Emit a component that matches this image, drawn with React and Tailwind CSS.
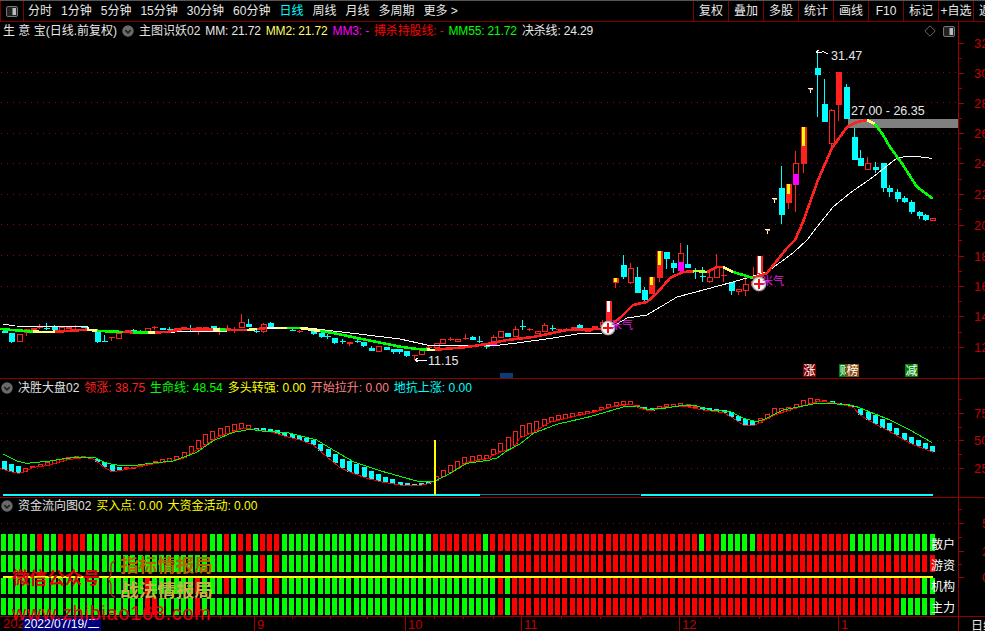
import React from "react";

const RED = "#ff2020";
const CY = "#00ffff";
const GR = "#00ff00";

const lerp = (pts, x) => {
  if (x <= pts[0][0]) return pts[0][1];
  for (let i = 1; i < pts.length; i++) {
    if (x <= pts[i][0]) {
      const [a, b] = pts[i - 1];
      const [c, d] = pts[i];
      return b + ((d - b) * (x - a)) / (c - a || 1);
    }
  }
  return pts[pts.length - 1][1];
};
const line = (pts) => pts.map((p) => `${p[0]},${p[1]}`).join(" ");

// candles: x, kind, bodyTop, bodyBottom, high, low; kind: c cyan, h hollow, R solid, y yellow-topped, w white-topped, m hollow+magenta
const CANDLES = [
  [3.5,"c",331,333],[10.5,"c",333,342,333,343],[18.5,"h",334,342],[25.5,"h",329,333,329,336],[32.5,"R",328,330,328,332],[39,"R",327,328,324,329],[46,"c",328,329,323,330],[54,"c",327,330,325,331],[61,"h",327,331],[68,"R",327,329],[75,"R",326,327,325,329],[83,"c",326,328],[97,"c",332,342,332,343],[104,"c",341,342,335,342],[111,"R",337,338,337,341],[118,"h",333,339],[127,"h",330,333],[133,"c",330,331,329,332],[140,"c",331,332,330,333],[147,"h",328,332],[154,"R",327,328,326,330],[162,"c",328,330],[169,"c",329,330,327,331],[176,"h",328,331],[183,"h",327,330],[190,"c",329,330,325,331],[198,"R",327,331,327,335],[205,"R",327,329],[213,"c",326,329],[219,"R",331,332,327,335],[227,"R",328,329,325,330],[234,"R",329,330,327,333],[241,"h",322,328,314,328],[248,"c",324,327,319,327],[256,"c",331,332,329,333],[263,"h",324,332,323,333],[270,"c",323,327,322,328],[278,"c",327,328],[285,"c",328,329],[292,"c",330,331,328,331],[299,"R",331,332,330,333],
  [306,"R",328,330],[313,"c",330,334,330,335],[321,"c",333,337,333,338],[327,"c",336,337,334,339],[334,"c",338,343,338,344],[342,"c",341,342,339,344],[349,"h",342,344,342,346],[357,"c",341,342,339,343],[363,"c",342,346,342,347],[371,"c",348,351,346,351],[378,"h",346,352],[386,"c",347,350],[393,"c",349,352,349,354],[399,"c",349,352,349,354],[406,"c",351,356,351,357],[414,"R",355,356,355,360],[421,"h",350,355],[428,"R",347,348,345,350],[436,"h",343,348],[442,"h",339,344],[450,"R",339,340,337,341],[457,"h",339,342],[465,"R",338,339,334,340],[472,"c",337,340,336,340],[479,"c",341,342,336,343],[486,"c",344,347,344,349],[493,"m",337,345,335,345,341],[500,"h",331,338],[507,"c",333,337],[515,"h",329,337,326,337],[522,"c",326,327,320,330],[529,"R",329,330,328,331],[537,"h",331,334],[544,"h",325,332,323,332],[552,"c",328,329,325,331],[558,"R",329,330],[566,"R",329,330,328,331],
  [572.6,"h",327,329],[579,"c",325,328,324,329],[587,"h",329,332],[594,"h",326,328],[601.6,"h",322,327,320,327],[608,"w",301,330,301,330,312],[615,"y",278,283,278,288,282],[623,"c",265,277,255,279],[630,"h",268,283,263,284],[637,"c",277,293,267,293],[644,"c",290,300,287,303],[651,"y",277,294,277,294,285],[659,"y",251,278,251,282,265],[666,"c",252,259,252,269],[673,"c",263,268,260,273],[680,"m",253,271,243,272,262],[687,"c",264,268,245,268],[695,"c",270,271,268,279],[702,"c",276,277,267,282],[709,"h",277,282,272,283],[716,"h",267,278,254,278],[723,"R",275,276,267,282],[731,"c",282,291,282,295],[738,"h",289,292,289,295],[745,"h",284,291,277,296],[752.6,"h",281,286,267,286],[759,"w",256,278,256,278,273],
  [781,"c",188,215,166,224],[788,"y",184,203,184,209,194],[795,"m",163,185,151,212,174],[803,"y",127,164,127,173,146],[817,"c",68,75,52,117],[824,"c",104,122,79,122],[831,"h",110,144,109,148],[838,"R",72,105,72,121],[846,"c",87,119,84,119],[853.6,"c",137,160,128,160],[860,"c",158,166,150,166],[867,"h",163,170,157,170],[875,"c",167,170,162,173],[882.6,"c",163,188,163,192],[889,"c",188,192,185,197],[896.6,"c",192,199,189,202],[903.6,"c",198,202,196,203],[911,"c",202,212,200,214],[918.6,"c",212,216,211,219],[925,"c",215,220,214,221],[932,"h",218,221],
];

const Candle = ({ c }) => {
  const [x, k, t, b, hi = t, lo = b, split] = c;
  const px = Math.round(x) - 2.5 + 0.5;
  const colour = k === "c" ? CY : RED;
  const cx = Math.round(x) + 0.5;
  return (
    <g>
      {(hi < t || lo > b) && <line x1={cx} x2={cx} y1={hi} y2={lo} stroke={colour} />}
      {k === "h" && <rect x={px} y={t + 0.5} width={5} height={Math.max(b - t - 1, 1)} fill="#000" stroke={RED} />}
      {k === "c" && <rect x={px - 0.5} y={t} width={6} height={b - t} fill={CY} />}
      {k === "R" && <rect x={px - 0.5} y={t} width={6} height={b - t} fill={RED} />}
      {k === "y" && <><rect x={px - 0.5} y={t} width={6} height={b - t} fill={RED} /><rect x={px + 1} y={t} width={3} height={split - t} fill="#ffff00" /></>}
      {k === "w" && <><rect x={px - 0.5} y={t} width={6} height={b - t} fill={RED} /><rect x={px + 1} y={t} width={3} height={split - t} fill="#fff" /></>}
      {k === "m" && <><rect x={px} y={t + 0.5} width={5} height={split - t} fill="#000" stroke={RED} /><rect x={px - 0.5} y={split} width={6} height={b - split} fill="#ff00ff" /></>}
    </g>
  );
};

const WHITE_MA = [[3,324],[15,326],[87,326.5],[90,330],[150,333],[183,331.7],[247,330.7],[267,328],[300,327],[333,331],[367,335],[400,339],[427,345],[467,345],[500,345],[517,343],[553,338],[577,334],[602,333],[627,318],[647,315],[677,297],[707,289],[733,282],[767,272],[793,253],[807,240],[817,227],[833,207],[850,193],[873,177],[897,158],[910,156],[927,157.5],[932,159]];
const THICK = [[0,329],[13,330],[33,331.7],[50,332],[67,331],[87,329.7],[100,331],[123,332],[147,332.7],[167,332],[183,329],[213,329.7],[247,330],[267,328],[300,328],[333,333],[367,340],[400,346.7],[417,349],[433,350],[467,347],[487,344],[507,340],[533,337],[567,330],[600,329],[608,327],[620,318],[633,305],[647,302],[657,293],[670,278],[683,272],[697,271],[707,272],[717,267],[723,267],[733,272],[743,275],[753,278],[767,273],[787,248],[795,240],[803,222],[818,180],[832,148],[847,127],[857,122],[867,120],[875,124],[883,135],[890,147],[903,165],[917,187],[932,198]];
const Y = "#ffff80";
const STOPS = [[33,GR],[55,Y],[87,RED],[97,Y],[123,GR],[133,RED],[148,GR],[155,Y],[213,RED],[220,Y],[227,GR],[247,RED],[257,Y],[267,RED],[277,"#ffffff"],[287,Y],[300,GR],[320,Y],[427,GR],[435,Y],[693,RED],[707,"#b0ff40"],[723,RED],[733,Y],[753,GR],[867,RED],[875,Y],[933,GR]];
const thickRuns = () => {
  const runs = [];
  let start = 0;
  STOPS.forEach(([end, colour]) => {
    const pts = [];
    for (let x = start; x <= end; x += 1) pts.push([x, lerp(THICK, x)]);
    runs.push({ colour, pts });
    start = end;
  });
  return runs;
};

const GRID = [72, 102, 133, 163, 194, 224, 255, 286, 316, 347];
const Dots = ({ ys }) => ys.map((y) => <line key={y} x1="1" x2="958" y1={y + 0.5} y2={y + 0.5} stroke="#a00000" strokeDasharray="1 5" />);

const Sparkle = ({ x, y }) => (
  <g>
    <circle cx={x} cy={y} r="7.5" fill="url(#ball)" shapeRendering="auto" />
    <path d={`M${x - 5} ${y}H${x + 5}M${x} ${y - 5}V${y + 5}`} stroke="#f01010" strokeWidth="2" />
    <text x={x + 3} y={y + 1} fontSize="11" fill="#e020e0">米气</text>
  </g>
);

const Tmark = ({ x, y }) => (
  <g>
    <path d={`M${x - 2.5} ${y + 0.5}H${x + 3}M${x + 0.5} ${y}V${y + 5}`} stroke="#fff" fill="none" />
    <path d={`M${x - 1.5} ${y + 1.5}H${x + 2.5}`} stroke="#ff9000" fill="none" />
  </g>
);

const MainChart = () => (
  <svg viewBox="0 22 958 356" width="958" height="356" shapeRendering="crispEdges" className="block">
    <defs>
      <radialGradient id="ball">
        <stop offset="70%" stopColor="#ffffff" />
        <stop offset="100%" stopColor="#777777" />
      </radialGradient>
    </defs>
    <Dots ys={GRID} />
    <rect x="848" y="119" width="110" height="9" fill="#808080" />
    {CANDLES.map((c, i) => <Candle key={i} c={c} />)}
    <Tmark x={810} y={88} />
    <Tmark x={774} y={198} />
    <Tmark x={767} y={229} />
    <polyline points={line(WHITE_MA)} fill="none" stroke="#fff" strokeWidth="1" />
    {thickRuns().map((r, i) => (
      <polyline key={i} points={line(r.pts)} fill="none" stroke={r.colour} strokeWidth="2.6" />
    ))}
    <Sparkle x={608} y={328} />
    <Sparkle x={759} y={284} />
    <path d="M816 52h6M816 52l3-2M822 51l6 3" stroke="#fff" fill="none" />
    <path d="M415 360h12M415 360l3-2M415 360l3 2" stroke="#fff" fill="none" />
    <g fontFamily="'Liberation Sans',sans-serif" fontSize="12.5" fill="#e8e8e8" shapeRendering="auto">
      <text x="831" y="60">31.47</text>
      <text x="851" y="115">27.00 - 26.35</text>
      <text x="428" y="365">11.15</text>
    </g>
  </svg>
);

const A1 = [[0,252],[30,265],[55,273],[75,280],[100,272],[140,260],[200,248],[230,241],[270,245],[285,250],[310,260],[335,270],[360,278],[410,274],[470,256],[520,248],[550,232],[590,197],[620,175],[650,163],[700,148],[730,142],[760,157],[810,162],[860,172],[900,185],[940,195],[980,220],[1020,250],[1060,262],[1100,282],[1150,305],[1200,320],[1250,328],[1285,318],[1310,300],[1350,270],[1400,242],[1470,240]];
const B1 = [[0,280],[30,290],[55,295],[75,290],[100,277],[140,272],[200,255],[230,250],[270,247],[285,255],[310,275],[335,290],[360,287],[410,276],[470,265],[520,258],[550,250],[590,225],[620,208],[650,187],[700,170],[730,160],[760,163],[810,170],[860,185],[900,195],[940,210],[980,245],[1020,278],[1060,295],[1100,310],[1150,322],[1200,330],[1250,333],[1285,326],[1310,315],[1350,295],[1400,262],[1470,250]];
const A2 = [[0,228],[30,205],[70,172],[90,150],[130,142],[180,125],[250,113],[310,105],[370,80],[425,78],[450,95],[480,100],[520,88],[580,85],[640,97],[700,105],[730,115],[760,130],[790,138],[830,118],[850,100],[900,95],[950,70],[990,72],[1040,82],[1090,92],[1110,102],[1160,122],[1200,147],[1260,185],[1330,213]];
const B2 = [[0,245],[30,232],[70,220],[90,188],[130,172],[180,142],[250,125],[310,112],[370,95],[425,88],[450,100],[480,108],[520,98],[580,93],[640,105],[700,113],[730,130],[760,150],[790,153],[830,133],[850,122],[900,105],[950,90],[990,78],[1040,85],[1090,97],[1110,120],[1160,150],[1200,170],[1260,205],[1330,232]];
const G1 = [[10,238],[50,258],[80,265],[150,258],[200,250],[240,246],[285,248],[300,255],[320,265],[350,270],[400,272],[450,265],[520,258],[590,232],[640,197],[700,172],[750,163],[800,170],[860,172],[950,195],[1000,225],[1060,260],[1150,290],[1250,318],[1300,320],[1350,295],[1400,265],[1470,255]];
const G2 = [[0,253],[20,250],[50,228],[90,207],[130,175],[200,148],[300,125],[400,96],[440,93],[470,103],[520,100],[580,91],[620,93],[660,105],[720,110],[760,130],[800,140],[830,130],[880,105],[980,85],[1070,88],[1100,95],[1200,135],[1260,165],[1325,202]];
const conv = (pts, off) => pts.map(([x, y]) => [off + x / 3, 375 + y / 3]);
const UP = [...conv(A1, 0), ...conv(A2, 490)].sort((a, b) => a[0] - b[0]);
const LOW = [...conv(B1, 0), ...conv(B2, 490)].sort((a, b) => a[0] - b[0]);
const COOL = [[0, 25], [95, 122], [250, 433], [638, 652], [697, 758], [825, 850], [850, 940]];

const IndicatorOne = () => {
  const bars = [];
  for (let i = 0; i < 130; i++) bars.push(3.5 + 7.2 * i);
  return (
    <svg viewBox="0 379 958 118" width="958" height="118" shapeRendering="crispEdges" className="block">
      <Dots ys={[413, 440, 468]} />
      {bars.map((x) => {
        const t = Math.round(lerp(UP, x));
        const b = Math.round(lerp(LOW, x));
        const cool = COOL.some(([a, z]) => x >= a && x <= z);
        const px = Math.round(x) - 2;
        return cool ? (
          <rect key={x} x={px} y={t} width={5} height={Math.max(b - t, 1)} fill={CY} />
        ) : (
          <rect key={x} x={px + 0.5} y={t + 0.5} width={4} height={Math.max(b - t - 1, 1)} fill="#000" stroke={RED} />
        );
      })}
      <polyline points={line(LOW)} fill="none" stroke="#f00000" strokeWidth="1" />
      <polyline points={line([...conv(G1, 0), ...conv(G2, 490)].sort((a, b) => a[0] - b[0]))} fill="none" stroke={GR} strokeWidth="1" />
      <rect x="3" y="494" width="477" height="2" fill={CY} />
      <rect x="480" y="494" width="160" height="1" fill="#00808c" />
      <rect x="641" y="494" width="292" height="2" fill={CY} />
      <rect x="434" y="440" width="2" height="55" fill="#ffff00" />
    </svg>
  );
};

const ranges = (list) => {
  const out = new Array(130).fill(false);
  list.forEach((v) => {
    if (Array.isArray(v)) for (let i = v[0]; i <= v[1]; i++) out[i] = true;
    else out[v] = true;
  });
  return out;
};
const ROWS = [
  { y: 534, h: 17, red: ranges([5, [8, 11], [17, 28], 31, [33, 34], [36, 38], [60, 66], [68, 96], [98, 99], [105, 117]]) },
  { y: 555, h: 17, red: ranges([33, 36, 38, 69, [71, 129]]) },
  { y: 578, h: 16, red: ranges([20, 27, 31, 33, 36, 38, 69, [71, 127]]) },
  { y: 598, h: 17, red: ranges([20, 21, 27, 69, [71, 124]]) },
];

const IndicatorTwo = () => (
  <svg viewBox="0 498 958 118" width="958" height="118" shapeRendering="crispEdges" className="block">
    <Dots ys={[523]} />
    {ROWS.map((r) =>
      r.red.map((isRed, i) => (
        <rect key={`${r.y}-${i}`} x={Math.round(0.7 + 7.2 * i)} y={r.y} width={5} height={r.h} fill={isRed ? "#ff0000" : "#00ff00"} />
      ))
    )}
    <rect x="3" y="576" width="930" height="2" fill="#ffff00" />
  </svg>
);

const Chevron = () => (
  <svg width="12" height="12" viewBox="0 0 13 13" className="shrink-0">
    <circle cx="6.5" cy="6.5" r="6.2" fill="#6a6a6a" />
    <path d="M3.5 5.5l3 3 3-3" fill="none" stroke="#1c1c1c" strokeWidth="1.6" />
  </svg>
);

const PanelToggle = () => (
  <svg width="12" height="11" viewBox="0 0 12 11" className="shrink-0">
    <rect x="0.5" y="0.5" width="11" height="10" rx="1.5" fill="#222" stroke="#777" />
    <rect x="6.5" y="2" width="3.5" height="7" fill="#bbb" />
  </svg>
);

const LEFT_TABS = ["分时", "1分钟", "5分钟", "15分钟", "30分钟", "60分钟", "日线", "周线", "月线", "多周期", "更多 >"];
const RIGHT_TABS = ["复权", "叠加", "多股", "统计", "画线", "F10", "标记", "+自选", "返回"];

const Toolbar = () => (
  <div className="flex h-[22px] shrink-0 border-t border-t-[#555555] border-b border-b-[#800000] text-[12px] text-[#e8e8e8]">
    <div className="flex h-full w-[24px] shrink-0 items-center justify-center border-r border-l border-[#800000]">
      <PanelToggle />
    </div>
    <div className="flex min-w-0 flex-1 items-center gap-[9px] pl-[4px] whitespace-nowrap">
      {LEFT_TABS.map((t) => (
        <span key={t} className={t === "日线" ? "text-[#00ffff]" : ""}>{t}</span>
      ))}
    </div>
    <div className="flex w-[292px] shrink-0 overflow-hidden">
      {RIGHT_TABS.map((t) => (
        <span key={t} className="flex w-[35px] shrink-0 items-center justify-center border-l border-[#800000] whitespace-nowrap">{t}</span>
      ))}
    </div>
  </div>
);

const Leg = ({ c, children }) => <span style={{ color: c }}>{children}</span>;

const Legend = ({ items, name, className = "" }) => (
  <div className={`absolute left-[1px] flex h-[16px] items-center gap-[5px] text-[12px] whitespace-nowrap ${className}`}>
    <Chevron />
    <span className="text-[#e0e0e0]">{name}</span>
    {items.map(([c, t]) => <Leg key={t} c={c}>{t}</Leg>)}
  </div>
);

const AxisLabels = ({ labels, left = "pl-[15px]" }) =>
  labels.map(([t, y, minor]) => (
    <div key={`${t}-${y}`} className="absolute right-0 left-0 flex items-center" style={{ top: y - 5 }}>
      <span className={`h-px bg-[#a00000] ${minor ? "w-[3px]" : "w-[5px]"}`} />
      {t && <span className={`absolute top-[-7px] ${left} text-[13px] leading-[15px] text-[#c00000]`}>{t}</span>}
    </div>
  ));

const MAIN_AXIS = [["32", 43],["", 58, 1],["30", 73],["", 88, 1],["28", 103],["", 118, 1],["26", 133],["", 148, 1],["24", 163],["", 179, 1],["22", 194],["", 209, 1],["20", 225],["", 240, 1],["18", 256],["", 271, 1],["16", 286],["", 301, 1],["14", 316],["", 332, 1],["12", 347]];

const Badge = ({ bg, children, className = "" }) => (
  <span className={`absolute top-[342px] flex h-[13px] w-[13px] items-center justify-center text-[12px] leading-none text-white ${className}`} style={{ background: bg }}>{children}</span>
);

const DATE_MARKS = [[254, "9"], [405, "10"], [521, "11"], [679, "12"], [838, "1"]];
const SMALL_TICKS = [292, 330, 367, 434, 463, 493, 561, 600, 640, 719, 759, 798, 100, 140, 180, 220];

const App = () => (
  <div className="flex h-[631px] w-[985px] flex-col overflow-hidden bg-black font-['Liberation_Sans','Noto_Sans_CJK_SC',sans-serif]">
    <Toolbar />
    <div className="flex h-[357px] shrink-0 border-b border-[#900000]">
      <div className="relative w-[958px] shrink-0 border-r-0">
        <MainChart />
        <div className="absolute top-[1px] left-[3px] flex h-[16px] items-center gap-[5px] text-[12px] tracking-[-0.15px] whitespace-nowrap">
          <span className="w-[114px] tracking-normal text-[#e8e8e8]">生 意 宝(日线.前复权)</span>
          <Chevron />
          <span className="tracking-normal text-[#e0e0e0]">主图识妖02</span>
          <Leg c="#e8e8e8">MM: 21.72</Leg>
          <Leg c="#ffff66">MM2: 21.72</Leg>
          <Leg c="#ff00ff">MM3: -</Leg>
          <Leg c="#ff0000">搏杀持股线: -</Leg>
          <Leg c="#00ff00">MM55: 21.72</Leg>
          <Leg c="#e8e8e8">决杀线: 24.29</Leg>
        </div>
        <svg width="12" height="12" viewBox="0 0 12 12" className="absolute top-[3px] left-[924px]">
          <path d="M6 .8L11.2 6 6 11.2.8 6z" fill="none" stroke="#666" />
        </svg>
        <div className="absolute top-[4px] left-[943px]"><PanelToggle /></div>
        <Badge bg="#800000" className="left-[803px]">涨</Badge>
        <Badge bg="#008000" className="left-[839px]">财</Badge>
        <Badge bg="#8b4a10" className="left-[846px]">榜</Badge>
        <Badge bg="#008000" className="left-[905px]">减</Badge>
        <span className="absolute top-[351px] left-[500px] h-[5px] w-[13px] bg-[#0a3c78]" />
      </div>
      <div className="relative flex-1 border-l border-[#a00000]">
        <AxisLabels labels={MAIN_AXIS.map(([t, y, m]) => [t, y - 22 + 5, m])} />
      </div>
    </div>
    <div className="flex h-[119px] shrink-0 border-b border-[#900000]">
      <div className="relative w-[958px] shrink-0">
        <IndicatorOne />
        <Legend
          name="决胜大盘02"
          className="top-[1px]"
          items={[["#ff2020","领涨: 38.75"],["#00ff00","生命线: 48.54"],["#ffff00","多头转强: 0.00"],["#ff8080","开始拉升: 0.00"],["#00ffff","地抗上涨: 0.00"]]}
        />
      </div>
      <div className="relative flex-1 border-l border-[#a00000]">
        <AxisLabels labels={[["75", 39],["", 25, 1],["", 53, 1],["50", 66],["", 80, 1],["25", 94]]} />
      </div>
    </div>
    <div className="flex h-[119px] shrink-0 border-b border-[#900000]">
      <div className="relative w-[958px] shrink-0">
        <IndicatorTwo />
        <Legend
          name="资金流向图02"
          className="top-[0px]"
          items={[["#ffff00","买入点: 0.00"],["#ffff00","大资金活动: 0.00"]]}
        />
        <div className="absolute top-[37px] right-[3px] flex flex-col text-[12px] leading-[21px] text-white">
          <span>散户</span><span>游资</span><span>机构</span><span>主力</span>
        </div>
        <div className="pointer-events-none absolute top-[58px] left-[12px] flex items-center">
          <span className="text-[17.6px] leading-none font-bold text-[#e00010]">微信公众号</span>
          <svg width="8" height="38" viewBox="2 0 8 38" className="ml-[8px] shrink-0">
            <path d="M9 1C4 2 5 6 5 12c0 4-1 6-4 7 3 1 4 3 4 7 0 6-1 10 4 11" fill="none" stroke="#c81818" strokeWidth="1.3" />
          </svg>
          <div className="ml-[4px] flex flex-col gap-[5px] text-[18.6px] leading-[20px] font-bold whitespace-nowrap">
            <span className="text-[#b86200]">指标情报局</span>
            <span className="text-[#c8b048]">战法情报局</span>
          </div>
        </div>
        <span className="pointer-events-none absolute top-[103px] left-[12px] z-10 text-[19.5px] leading-[24px] tracking-[0.9px] whitespace-nowrap text-[#e80018]">www.zhibiao168.com</span>
      </div>
      <div className="relative flex-1 border-l border-[#a00000]">
        <AxisLabels labels={[["5", 30],["", 16, 1],["2", 58],["", 44, 1],["0", 84],["", 71, 1]]} left="pl-[23px]" />
      </div>
    </div>
    <div className="flex min-h-0 flex-1">
      <div className="relative w-[958px] shrink-0 overflow-hidden">
        <span className="absolute top-[-1px] left-[3px] text-[13px] leading-[15px] text-[#c00000]">202</span>
        <span className="absolute top-0 left-[23px] flex h-[14px] w-[78px] items-center bg-[#000080] pl-[1px] text-[12px] whitespace-nowrap text-white">2022/07/19/二</span>
        {SMALL_TICKS.map((x) => <span key={x} className="absolute top-0 h-[2px] w-px bg-[#a00000]" style={{ left: x }} />)}
        {DATE_MARKS.map(([x, t]) => (
          <span key={t} className="absolute top-0 flex h-[14px] border-l border-[#a00000] pl-[2px] text-[13px] leading-[15px] text-[#c00000]" style={{ left: x }}>{t}</span>
        ))}
      </div>
      <div className="flex-1 border-l border-[#a00000] pl-[12px] text-[12px] leading-[18px] whitespace-nowrap text-[#e8e8e8]">日线</div>
    </div>
  </div>
);

export default App;
